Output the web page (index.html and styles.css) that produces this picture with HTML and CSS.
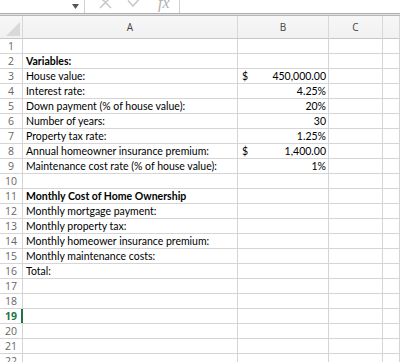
FILE: index.html
```html
<!DOCTYPE html>
<html>
<head>
<meta charset="utf-8">
<link rel="stylesheet" href="styles.css">
</head>
<body>
<div class="toolbar">
  <div class="namebox"><svg class="caret" width="7" height="5" viewBox="0 0 7 5"><path d="M0 0H7L3.5 5Z" fill="#555"/></svg></div>
  <div class="sep"></div>
  <svg class="ico x" width="14" height="13" viewBox="0 0 14 13"><path d="M1 -3L12 8M12 -3L1 8" stroke="#c9c9c9" stroke-width="1.6" fill="none"/></svg>
  <svg class="ico check" width="15" height="13" viewBox="0 0 15 13"><path d="M1 0.5L6 6L14 -3" stroke="#c9c9c9" stroke-width="1.6" fill="none"/></svg>
  <span class="fx">fx</span>
  <div class="sep sep2"></div>
</div>
<div class="divider"></div>
<div class="sheet">
  <div class="corner"><div class="tri"></div></div>
  <div class="ch">A</div><div class="ch">B</div><div class="ch">C</div><div class="ch last"></div>
</div>
<div id="rows" class="sheet"></div>
<script src="app.js"></script>
</body>
</html>
```
FILE: styles.css
```css
html, body { margin: 0; padding: 0; background: #fff; }
body { font-family: Lato, "Open Sans", sans-serif; width: 400px; height: 362px; overflow: hidden; }
.toolbar { height: 13px; display: flex; align-items: flex-start; overflow: hidden; }
.namebox { width: 84px; display: flex; justify-content: flex-end; }
.caret { margin: 4px 5px 0 0; }
.sep { width: 1px; height: 13px; background: #d0d0d0; }
.ico { display: block; }
.x { margin-left: 14px; }
.check { margin-left: 14px; }
.fx { font-family: "Liberation Serif", serif; font-style: italic; color: #b0b0b0; font-size: 16px; line-height: 8px; margin-left: 16px; margin-top: -1px; }
.sep2 { margin-left: 9px; }
.divider { height: 1px; border-top: 1px solid #aeaeae; border-bottom: 1px solid #b6b6b6; background: #e2e2e2; }
.sheet { display: grid; grid-template-columns: 23px 215px 91px 54px 1fr; }
.sheet > div { box-sizing: border-box; border-right: 1px solid #d5d5d5; border-bottom: 1px solid #d5d5d5; height: 15px; font-size: 10.5px; line-height: 14px; white-space: nowrap; overflow: visible; }
.sheet > .corner, .sheet > .ch { height: 23px; background: linear-gradient(#f7f7f7, #f1f1f1); border-bottom-color: #c8c8c8; border-right-color: #d8d8d8; font-family: "Open Sans", sans-serif; font-size: 10px; color: #444; line-height: 22px; text-align: center; }
.corner { position: relative; }
.tri { position: absolute; right: 2px; bottom: 2px; width: 0; height: 0; border-left: 14px solid transparent; border-bottom: 14px solid #d9d9d9; }
.sheet > .rh { text-align: center; color: #666; font-size: 10.5px; font-family: "Open Sans", sans-serif; position: relative; }
.sheet > .rh.sel { color: #217346; font-weight: bold; }
.sel-bar { position: absolute; right: -1px; top: 0; width: 2px; height: 14px; background: #217346; }
.sheet > .a { padding-left: 3px; color: #000; overflow: visible; position: relative; z-index: 1; }
.sheet > .a.b { font-weight: bold; }
.sheet > .num { display: flex; justify-content: space-between; padding: 0 2px 0 4px; color: #000; }
```
FILE: app.js
```js
const data = [
  ["", "", ""],
  ["Variables:", "", "", true],
  ["House value:", "$", "450,000.00"],
  ["Interest rate:", "", "4.25%"],
  ["Down payment (% of house value):", "", "20%"],
  ["Number of years:", "", "30"],
  ["Property tax rate:", "", "1.25%"],
  ["Annual homeowner insurance premium:", "$", "1,400.00"],
  ["Maintenance cost rate (% of house value):", "", "1%"],
  ["", "", ""],
  ["Monthly Cost of Home Ownership", "", "", true],
  ["Monthly mortgage payment:", "", ""],
  ["Monthly property tax:", "", ""],
  ["Monthly homeower insurance premium:", "", ""],
  ["Monthly maintenance costs:", "", ""],
  ["Total:", "", ""],
  ["", "", ""], ["", "", ""], ["", "", ""], ["", "", ""], ["", "", ""], ["", "", ""]
];
const rows = document.getElementById("rows");
data.forEach((r, i) => {
  const n = i + 1;
  const rh = document.createElement("div");
  rh.className = "rh" + (n === 19 ? " sel" : "");
  rh.textContent = n;
  if (n === 19) { const bar = document.createElement("span"); bar.className = "sel-bar"; rh.appendChild(bar); }
  const a = document.createElement("div");
  a.className = "a" + (r[3] ? " b" : "");
  a.textContent = r[0];
  const b = document.createElement("div");
  b.className = "num";
  const s1 = document.createElement("span"); s1.textContent = r[1];
  const s2 = document.createElement("span"); s2.textContent = r[2];
  b.appendChild(s1); b.appendChild(s2);
  const c = document.createElement("div");
  const d = document.createElement("div");
  rows.append(rh, a, b, c, d);
});
```
